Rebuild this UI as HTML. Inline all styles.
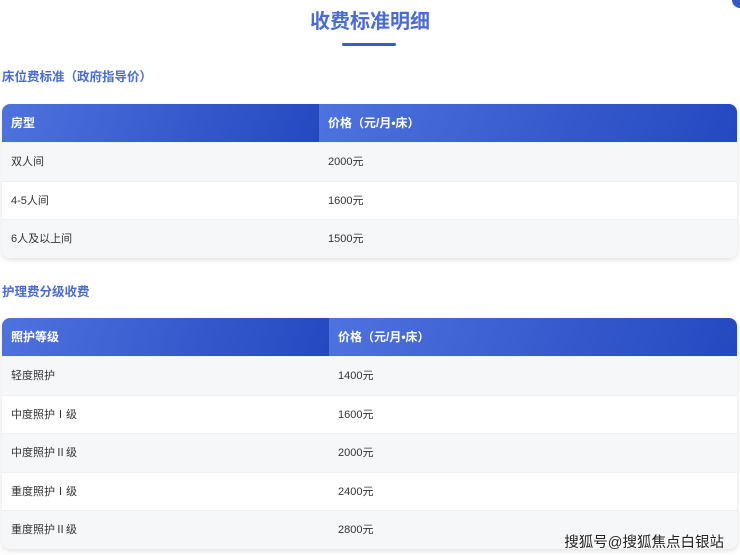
<!DOCTYPE html>
<html><head><meta charset="utf-8"><style>
body{margin:0;width:740px;height:555px;overflow:hidden;background:#fff;font-family:"Liberation Sans","Noto Sans CJK SC",sans-serif;position:relative}
.t{position:absolute;left:0;width:740px;top:7px;text-align:center;font-size:20px;font-weight:bold;color:#4a6bd6;line-height:30px}
.u{position:absolute;left:342px;top:43px;width:54px;height:3px;background:#3a5bd0;border-radius:2px}
.h{position:absolute;left:2px;font-size:12.5px;font-weight:bold;color:#4a6bd6}
.tb{position:absolute;left:2px;width:735px;border-radius:8px;overflow:hidden;box-shadow:0 2px 6px rgba(0,0,0,.12)}
.hd{display:flex;height:38px;color:#fff;font-size:12px;font-weight:bold}
.hd div{background:linear-gradient(110deg,#4e72de,#2448c0);padding-left:9px;line-height:38px}
.r{display:flex;height:38.6px;font-size:11px;color:#333;line-height:38px;border-top:1px solid #eef0f3;box-sizing:border-box}
.r div{padding-left:9px}
.r:nth-child(even){background:#f6f7f9}
.r:nth-child(odd){background:#fff}
.wm{position:absolute;right:16px;top:531px;font-size:14.5px;color:#222;text-shadow:0 0 2px #fff,0 0 2px #fff}
.dot{position:absolute;right:-8px;top:-8px;width:16px;height:16px;border-radius:50%;background:#3858c8}
</style></head><body>
<div class="dot"></div>
<div class="t">收费标准明细</div>
<div class="u"></div>
<div class="h" style="top:66px">床位费标准（政府指导价）</div>
<div class="tb" style="top:104px">
<div class="hd"><div style="width:308px">房型</div><div style="flex:1">价格（元/月•床）</div></div>
<div class="r"><div style="width:308px">双人间</div><div>2000元</div></div>
<div class="r"><div style="width:308px">4-5人间</div><div>1600元</div></div>
<div class="r"><div style="width:308px">6人及以上间</div><div>1500元</div></div>
</div>
<div class="h" style="top:281px">护理费分级收费</div>
<div class="tb" style="top:318px">
<div class="hd"><div style="width:318px">照护等级</div><div style="flex:1">价格（元/月•床）</div></div>
<div class="r"><div style="width:318px">轻度照护</div><div>1400元</div></div>
<div class="r"><div style="width:318px">中度照护Ⅰ级</div><div>1600元</div></div>
<div class="r"><div style="width:318px">中度照护Ⅱ级</div><div>2000元</div></div>
<div class="r"><div style="width:318px">重度照护Ⅰ级</div><div>2400元</div></div>
<div class="r"><div style="width:318px">重度照护Ⅱ级</div><div>2800元</div></div>
</div>
<div class="wm">搜狐号@搜狐焦点白银站</div>
</body></html>
